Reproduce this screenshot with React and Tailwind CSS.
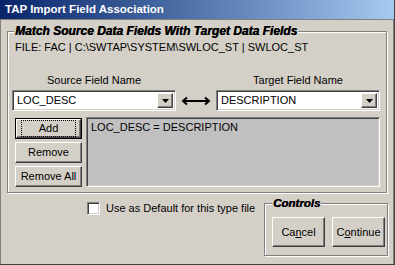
import React from "react";

const raised =
  "border border-t-white border-l-white border-r-[#404040] border-b-[#404040] shadow-[inset_-1px_-1px_0_#808080,inset_1px_1px_0_#d4d0c8]";
const sunken =
  "border border-t-[#808080] border-l-[#808080] border-r-white border-b-white shadow-[inset_1px_1px_0_#404040,inset_-1px_-1px_0_#d4d0c8]";
const etched =
  "border border-[#808080] shadow-[inset_1px_1px_0_#fff,1px_1px_0_#fff]";

function Combo({ value, className }) {
  return (
    <div className={`h-[21px] bg-white flex items-center p-[2px] ${sunken} ${className}`}>
      <div className="flex-1 pl-[2px] leading-none">{value}</div>
      <div className={`w-[16px] h-full flex items-center justify-center bg-[#d4d0c8] ${raised}`}>
        <svg width="7" height="4" viewBox="0 0 7 4">
          <path d="M0 0h7L3.5 4z" fill="#000" />
        </svg>
      </div>
    </div>
  );
}

function Btn({ children, className = "" }) {
  return (
    <div className={`bg-[#d4d0c8] flex items-center justify-center leading-none ${raised} ${className}`}>
      {children}
    </div>
  );
}

export default function App() {
  return (
    <div className="w-[395px] h-[265px] bg-[#d4d0c8] overflow-hidden flex flex-col font-['Liberation_Sans',Arial,sans-serif] text-[11px] text-black border-r border-b border-[#404040]">
      <div className="h-[19px] shrink-0 bg-gradient-to-r from-[#0a246a] to-[#a6caf0] flex items-center pl-[5px] text-white font-bold text-[11.5px]">
        TAP Import Field Association
      </div>
      <div className="flex-1 flex flex-col border-l border-t border-[#808080] border-r-[#808080] border-r pl-[6px] pr-[5px] pt-[11px]">
        {/* Main group */}
        <div className={`relative w-[380px] h-[162px] ${etched}`}>
          <div className="absolute left-[6px] top-[-9px] px-[1px] bg-[#d4d0c8] font-bold italic text-[12px] leading-[16px] [text-shadow:0.4px_0_0_#000]">
            Match Source Data Fields With Target Data Fields
          </div>
          <div className="flex flex-col pl-[4px] pr-[4px] pt-[9px]">
            <div className="ml-[3px] leading-[13px]">FILE: FAC | C:\SWTAP\SYSTEM\SWLOC_ST | SWLOC_ST</div>
            <div className="flex mt-[20px] leading-[13px]">
              <div className="w-[164px] text-center">Source Field Name</div>
              <div className="w-[40px]" />
              <div className="w-[164px] text-center">Target Field Name</div>
            </div>
            <div className="flex items-center mt-[3px]">
              <Combo value="LOC_DESC" className="w-[164px]" />
              <div className="w-[40px] flex justify-center">
                <svg width="30" height="10" viewBox="0 0 30 10">
                  <path d="M2 5h26" stroke="#000" strokeWidth="2" />
                  <path d="M6 1.5L2 5l4 3.5M24 1.5L28 5l-4 3.5" stroke="#000" strokeWidth="2" fill="none" />
                </svg>
              </div>
              <Combo value="DESCRIPTION" className="w-[164px]" />
            </div>
            <div className="flex mt-[6px]">
              <div className="flex flex-col gap-[3px] ml-[3px] pt-[1px] w-[67px]">
                <div className="h-[21px] border border-black">
                  <Btn className="h-full w-full">
                    <div className="border border-dotted border-black px-[17px] py-[2px]">Add</div>
                  </Btn>
                </div>
                <Btn className="h-[21px]">Remove</Btn>
                <Btn className="h-[21px]">Remove All</Btn>
              </div>
              <div className={`ml-[4px] w-[294px] h-[70px] bg-[#c0c0c0] px-[4px] py-[3px] leading-[13px] ${sunken}`}>
                LOC_DESC = DESCRIPTION
              </div>
            </div>
          </div>
        </div>
        {/* Bottom row */}
        <div className="flex items-start mt-[10px]">
          <div className="flex items-center ml-[80px] -mt-[1px]">
            <div className={`w-[13px] h-[13px] bg-white ${sunken}`} />
            <div className="ml-[6px] leading-[13px]">Use as Default for this type file</div>
          </div>
          <div className={`relative ml-auto w-[124px] h-[53px] ${etched}`}>
            <div className="absolute left-[7px] top-[-9px] px-[1px] bg-[#d4d0c8] font-bold italic text-[11.5px] leading-[16px] [text-shadow:0.4px_0_0_#000]">
              Controls
            </div>
            <div className="flex gap-[7px] pl-[7px] pt-[13px]">
              <Btn className="w-[53px] h-[30px]">
                <span>Ca<span className="underline">n</span>cel</span>
              </Btn>
              <Btn className="w-[53px] h-[30px]">
                <span>C<span className="underline">o</span>ntinue</span>
              </Btn>
            </div>
          </div>
        </div>
      </div>
    </div>
  );
}
